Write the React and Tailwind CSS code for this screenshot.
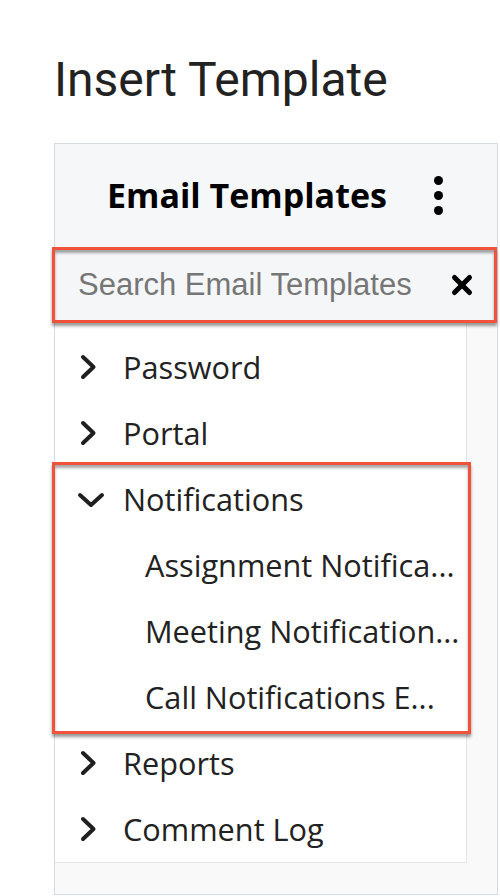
import React from 'react';

const folders = [
  { name: 'Password' },
  { name: 'Portal' },
];

const notifications = [
  'Assignment Notifica...',
  'Meeting Notification...',
  'Call Notifications E...',
];

const more = [{ name: 'Reports' }, { name: 'Comment Log' }];

function ChevronRight() {
  return (
    <svg width="20" height="28" viewBox="0 0 20 28" className="shrink-0">
      <polyline points="4,4 14.5,14 4,24" fill="none" stroke="#1f1f1f" strokeWidth="4" strokeLinecap="round" strokeLinejoin="round" />
    </svg>
  );
}

function ChevronDown() {
  return (
    <svg width="30" height="20" viewBox="0 0 30 20" className="shrink-0">
      <polyline points="4,5 15,15 26,5" fill="none" stroke="#1f1f1f" strokeWidth="4" strokeLinecap="round" strokeLinejoin="round" />
    </svg>
  );
}

function FolderRow({ name, open }) {
  return (
    <div className="h-[66px] flex items-center">
      <div className={open ? 'w-[68px] pl-[21px] pt-[2px] flex items-center' : 'w-[68px] pl-[24px] flex items-center'}>
        {open ? <ChevronDown /> : <ChevronRight />}
      </div>
      <span className="text-[30.7px] text-[#222] font-['Open_Sans',sans-serif]">{name}</span>
    </div>
  );
}

export default function App() {
  return (
    <div className="w-[500px] h-[896px] bg-white overflow-hidden">
      {/* Title */}
      <h1 className="pl-[54px] pt-[51px] h-[143px] text-[48px] leading-[58px] text-[#222] font-['Roboto',sans-serif] font-normal">
        Insert Template
      </h1>

      {/* Panel */}
      <div className="ml-[54px] w-[444px] h-[752px] border border-[#d6dbe1] bg-[#f9f9f9]">
        {/* Header */}
        <div className="h-[103px] bg-[#f6f7f9] flex items-center">
          <span className="ml-[52px] text-[34px] font-bold text-black font-['Open_Sans',sans-serif]">Email Templates</span>
          <div className="ml-auto mr-[54px] flex flex-col gap-[6px]">
            <div className="w-[9px] h-[9px] rounded-full bg-black" />
            <div className="w-[9px] h-[9px] rounded-full bg-black" />
            <div className="w-[9px] h-[9px] rounded-full bg-black" />
          </div>
        </div>

        {/* Search */}
        <div className="relative -ml-[3px] h-[76px] border-[3px] border-[#f0533a] bg-[#f5f6f8] flex items-center shadow-[0_3px_3px_rgba(0,0,0,0.4),inset_0_3px_3px_rgba(0,0,0,0.35)]">
          <span className="pl-[23px] text-[31px] text-[#767676] font-['Liberation_Sans',Arial,sans-serif]">Search Email Templates</span>
          <svg width="24" height="24" viewBox="0 0 24 24" className="ml-auto mr-[20px]">
            <line x1="4.5" y1="4.5" x2="19.5" y2="19.5" stroke="#000" strokeWidth="5" strokeLinecap="round" />
            <line x1="19.5" y1="4.5" x2="4.5" y2="19.5" stroke="#000" strokeWidth="5" strokeLinecap="round" />
          </svg>
        </div>

        {/* Tree */}
        <div className="w-[412px] bg-white border-r border-b border-[#e4e4e4] pt-[11px]">
          {folders.map((f) => (
            <FolderRow key={f.name} name={f.name} />
          ))}

          <div className="-ml-[3px] -mr-[5px] -my-[4px] py-[1px] border-[3px] border-[#f0533a] shadow-[0_3px_3px_rgba(0,0,0,0.4),inset_0_3px_3px_rgba(0,0,0,0.35)] bg-white">
            <FolderRow name="Notifications" open />
            {notifications.map((n) => (
              <div key={n} className="h-[66px] flex items-center pl-[90px]">
                <span className="text-[30.7px] text-[#222] whitespace-nowrap font-['Open_Sans',sans-serif]">{n}</span>
              </div>
            ))}
          </div>

          {more.map((f) => (
            <FolderRow key={f.name} name={f.name} />
          ))}
        </div>
      </div>
    </div>
  );
}
